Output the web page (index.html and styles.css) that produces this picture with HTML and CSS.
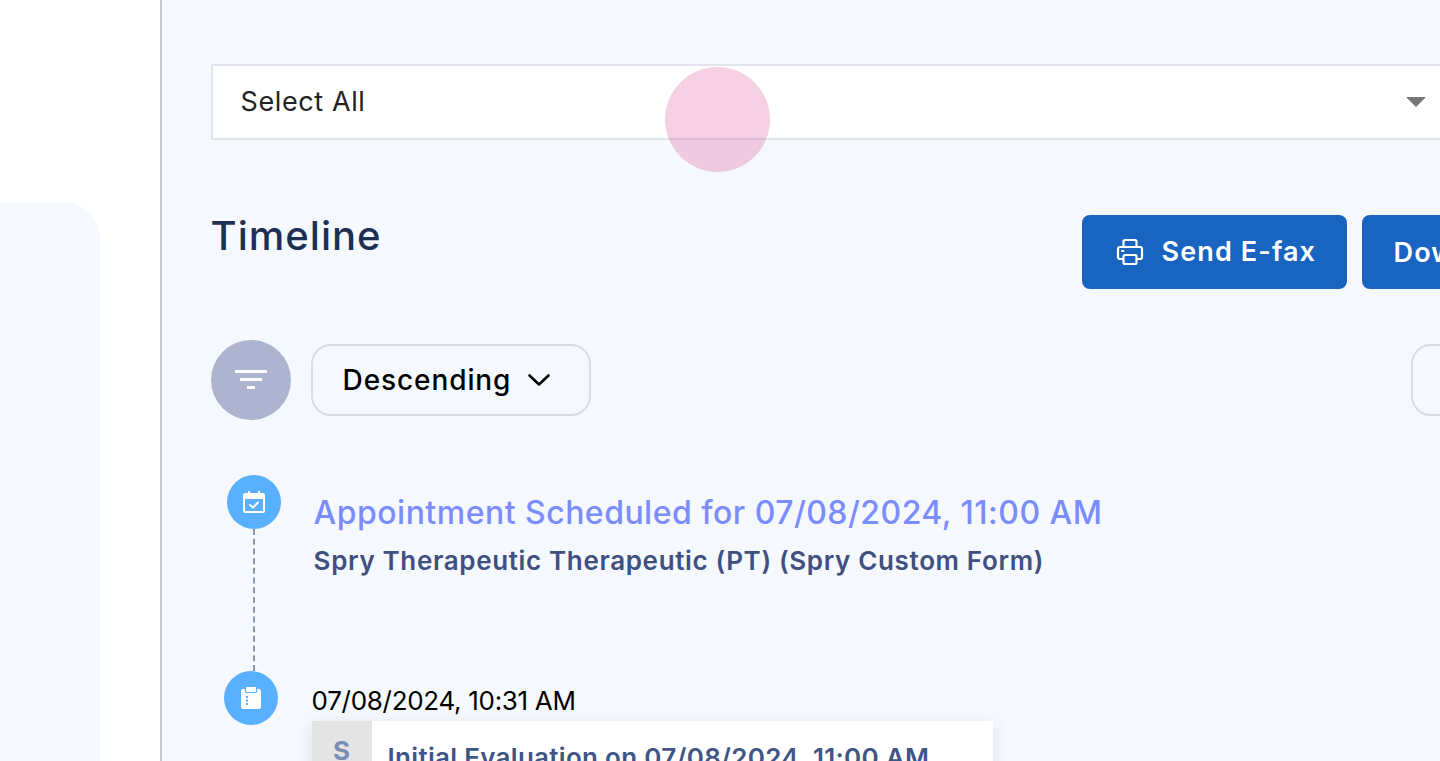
FILE: index.html
```html
<!DOCTYPE html>
<html lang="en">
<head>
  <meta charset="UTF-8">
  <meta name="viewport" content="width=device-width, initial-scale=1.0">
  <title>Timeline</title>
  <link rel="stylesheet" href="styles.css">
</head>
<body>
  <aside class="sidebar">
    <div class="side-card"></div>
  </aside>

  <main class="main">
    <div class="content">
      <div class="select-box">
        <span class="select-text">Select All</span>
        <span class="select-arrow"></span>
      </div>

      <div class="title-row">
        <h1>Timeline</h1>
        <div class="actions">
          <button class="btn btn-fax">
            <svg class="btn-icon" viewBox="0 0 28 28" fill="none" stroke="#fff" stroke-width="2.2" stroke-linejoin="round" stroke-linecap="round">
              <path d="M7.5 9V3.500a1.500 1.500 0 0 1 1.500-1.500h10a1.500 1.500 0 0 1 1.500 1.500V9"/>
              <path d="M7 21H4a2 2 0 0 1-2-2v-8a2 2 0 0 1 2-2h20a2 2 0 0 1 2 2v8a2 2 0 0 1-2 2h-3"/>
              <rect x="7.500" y="17" width="13" height="9" rx="1.500"/>
              <path d="M6 13h1.500"/>
            </svg>
            <span>Send E-fax</span>
          </button>
          <button class="btn btn-download">Download</button>
        </div>
      </div>

      <div class="filter-row">
        <div class="filter-left">
          <div class="filter-circle">
            <svg viewBox="0 0 32 20" width="32" height="24" fill="#fff">
              <rect x="0" y="0" width="32" height="3"/>
              <rect x="5" y="8" width="22" height="3"/>
              <rect x="12" y="16" width="8" height="3"/>
            </svg>
          </div>
          <button class="sort-btn">
            <span>Descending</span>
            <svg viewBox="0 0 24 14" width="24" height="14" fill="none" stroke="#000" stroke-width="2.600" stroke-linecap="round" stroke-linejoin="round">
              <path d="M2.500 2.500 12 11.500l9.500-9"/>
            </svg>
          </button>
        </div>
        <div class="outline-box"></div>
      </div>

      <div class="timeline">
        <div class="item item-first">
          <div class="rail">
            <div class="dot">
              <svg viewBox="0 0 24 24" width="24" height="24" fill="none" stroke="#fff" stroke-width="2">
                <rect x="2" y="4" width="20" height="18" rx="1"/>
                <rect x="2" y="4" width="20" height="5" fill="#fff" stroke="none"/>
                <path d="M7 1v4M17 1v4"/>
                <path d="m8 15 3 2.500 5-5" stroke-linecap="round" stroke-linejoin="round"/>
              </svg>
            </div>
            <div class="rail-line"></div>
          </div>
          <div class="item-body">
            <div class="appt-title">Appointment Scheduled for 07/08/2024, 11:00 AM</div>
            <div class="appt-sub">Spry Therapeutic Therapeutic (PT) (Spry Custom Form)</div>
          </div>
        </div>

        <div class="item item-second">
          <div class="rail">
            <div class="dot">
              <svg viewBox="0 0 24 24" width="24" height="24">
                <rect fill="#fff" x="2" y="3" width="20" height="20" rx="2"/>
                <rect fill="#fff" stroke="#58b0ff" stroke-width="1.200" x="6.500" y="0.500" width="11" height="6" rx="1"/>
                <path fill="#58b0ff" d="M7 10h2v2H7zM7 13.500h2v2H7zM7 17h2v2H7z"/>
              </svg>
            </div>
          </div>
          <div class="note">
            <div class="note-date">07/08/2024, 10:31 AM</div>
            <div class="note-card">
              <div class="note-tag">S</div>
              <div class="note-title">Initial Evaluation on 07/08/2024, 11:00 AM</div>
            </div>
          </div>
        </div>
      </div>
    </div>
  </main>

  <div class="pink-dot"></div>
</body>
</html>
```

FILE: styles.css
```css
* {
  margin: 0;
  padding: 0;
  box-sizing: border-box;
  font-family: 'Inter', 'Open Sans', sans-serif;
}

html, body {
  height: 761px;
  overflow: hidden;
}

body {
  display: flex;
  background: #fff;
}

.sidebar {
  flex: 0 0 162px;
  height: 761px;
  background: #fff;
  border-right: 2px solid #c9c9cb;
  padding-top: 202px;
}

.side-card {
  width: 100px;
  height: 559px;
  background: #f5f8fd;
  border-top-right-radius: 36px;
}

.main {
  flex: 1;
  min-width: 0;
  height: 761px;
  overflow: hidden;
  background: #f5f8fd;
  padding: 64px 0 0 48.6px;
}

.content {
  width: 1300px;
}

.select-box {
  height: 76px;
  background: #fff;
  border: 2px solid #e1e5ec;
  display: flex;
  align-items: center;
  justify-content: space-between;
  padding: 0 83px 0 28px;
}

.select-text {
  font-size: 27px;
  line-height: 32px;
  letter-spacing: 0.6px;
  color: #222;
}

.select-arrow {
  width: 0;
  height: 0;
  border-left: 10px solid transparent;
  border-right: 10px solid transparent;
  border-top: 10px solid #757575;
}

.title-row {
  display: flex;
  justify-content: space-between;
  align-items: flex-start;
  margin-top: 75px;
}

h1 {
  font-size: 40px;
  font-weight: 500;
  letter-spacing: 1px;
  color: #1d3053;
  line-height: 42px;
}

.actions {
  display: flex;
  gap: 15px;
}

.btn {
  height: 74px;
  border: none;
  border-radius: 8px;
  background: #1864c0;
  color: #fff;
  font-size: 27px;
  font-weight: 600;
  letter-spacing: 1.1px;
  display: flex;
  align-items: center;
}

.btn span {
  margin-top: -2px;
}

.btn-fax {
  width: 265px;
  padding-left: 34px;
  gap: 18px;
}

.btn-icon {
  width: 28px;
  height: 28px;
}

.btn-download {
  width: 149px;
  padding-left: 32px;
  white-space: nowrap;
  overflow: hidden;
}

.filter-row {
  display: flex;
  justify-content: space-between;
  align-items: center;
  margin-top: 51px;
}

.filter-left {
  display: flex;
  align-items: center;
  gap: 20px;
}

.filter-circle {
  width: 80px;
  height: 80px;
  border-radius: 50%;
  background: #aeb3cf;
  display: flex;
  align-items: center;
  justify-content: center;
}

.sort-btn {
  width: 280px;
  height: 72px;
  background: transparent;
  border: 2px solid #d9dce3;
  border-radius: 20px;
  font-size: 28px;
  font-weight: 500;
  letter-spacing: 0.9px;
  color: #000;
  display: flex;
  align-items: center;
  padding-left: 30px;
  gap: 16px;
}

.outline-box {
  width: 100px;
  height: 72px;
  border: 2px solid #d9dce3;
  border-radius: 20px;
}

.timeline {
  margin-top: 55px;
}

.item {
  display: flex;
}

.item-first {
  padding-left: 16px;
  gap: 33px;
  height: 196px;
}

.item-second {
  padding-left: 13px;
  gap: 34px;
}

.rail {
  width: 54px;
  display: flex;
  flex-direction: column;
  align-items: center;
}

.dot {
  width: 54px;
  height: 54px;
  flex: none;
  border-radius: 50%;
  background: #58b0ff;
  display: flex;
  align-items: center;
  justify-content: center;
}

.rail-line {
  flex: 1;
  border-left: 2px dashed #8a94b4;
}

.item-body {
  padding-top: 17px;
}

.appt-title {
  font-size: 32px;
  font-weight: 500;
  letter-spacing: 0.48px;
  line-height: 42px;
  color: #7b8cff;
  white-space: nowrap;
}

.appt-sub {
  font-size: 26px;
  font-weight: 600;
  letter-spacing: 0.65px;
  line-height: 34px;
  margin-top: 10px;
  color: #3f5080;
  white-space: nowrap;
}

.note {
  padding-top: 10px;
}

.note-date {
  font-size: 26px;
  letter-spacing: -0.3px;
  line-height: 40px;
  color: #000;
  white-space: nowrap;
}

.note-card {
  width: 681px;
  height: 100px;
  background: #fff;
  box-shadow: 0 4px 16px rgba(60, 70, 100, 0.12);
  display: flex;
}

.note-tag {
  width: 60px;
  background: #e4e4e4;
  color: #7a8db5;
  font-size: 26px;
  font-weight: 700;
  text-align: center;
  padding-top: 14px;
}

.note-title {
  padding: 21px 0 0 16px;
  font-size: 26px;
  font-weight: 600;
  letter-spacing: 0.3px;
  color: #3f5585;
  white-space: nowrap;
}

.pink-dot {
  position: absolute;
  left: 665px;
  top: 67px;
  width: 105px;
  height: 105px;
  border-radius: 50%;
  background: rgba(215, 63, 139, 0.25);
}
```
